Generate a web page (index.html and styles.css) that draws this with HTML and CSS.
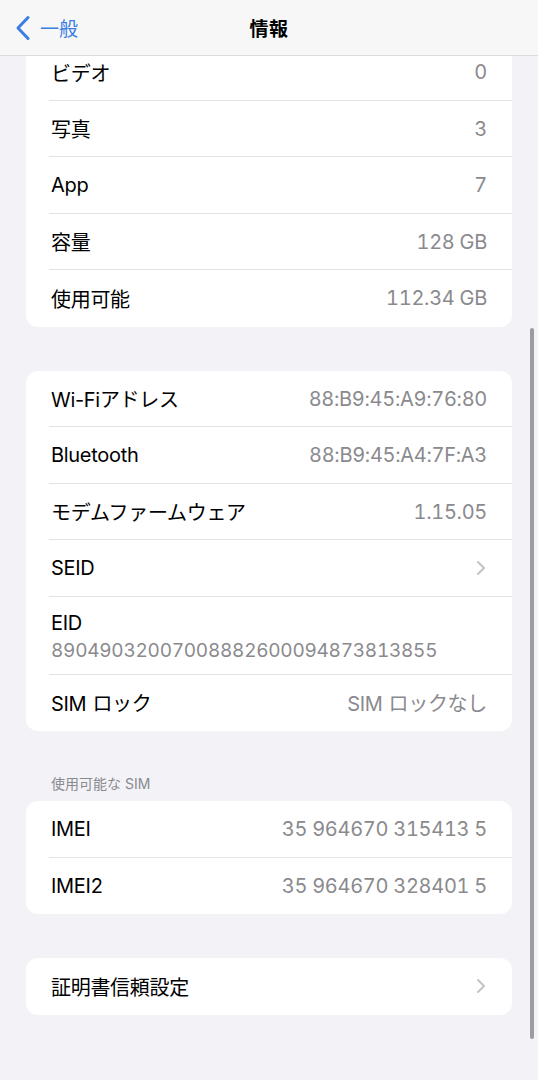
FILE: index.html
```html
<!DOCTYPE html>
<html lang="ja">
<head>
    <meta charset="UTF-8">
    <meta name="viewport" content="width=device-width, initial-scale=1.0">
    <title>情報</title>
    <link rel="stylesheet" href="styles.css">
</head>
<body>
    <div class="screen">
        <header class="navbar">
            <div class="back">
                <svg class="back-icon" width="16" height="26" viewBox="0 0 16 26">
                    <path d="M13 2.5 L3 13 L13 23.5" fill="none" stroke="currentColor" stroke-width="3" stroke-linecap="round" stroke-linejoin="round"/>
                </svg>
                <span>一般</span>
            </div>
            <div class="title">情報</div>
        </header>

        <main class="content">
            <section class="card">
                <div class="row"><span class="label">ビデオ</span><span class="value">0</span></div>
                <div class="row"><span class="label">写真</span><span class="value">3</span></div>
                <div class="row"><span class="label">App</span><span class="value">7</span></div>
                <div class="row"><span class="label">容量</span><span class="value">128 GB</span></div>
                <div class="row last"><span class="label">使用可能</span><span class="value">112.34 GB</span></div>
            </section>

            <section class="card">
                <div class="row"><span class="label">Wi-Fiアドレス</span><span class="value">88:B9:45:A9:76:80</span></div>
                <div class="row"><span class="label">Bluetooth</span><span class="value">88:B9:45:A4:7F:A3</span></div>
                <div class="row"><span class="label">モデムファームウェア</span><span class="value">1.15.05</span></div>
                <div class="row">
                    <span class="label">SEID</span>
                    <svg class="chevron" width="10" height="16" viewBox="0 0 10 16"><path d="M2 2 L8 8 L2 14" fill="none" stroke="currentColor" stroke-width="2" stroke-linecap="round" stroke-linejoin="round"/></svg>
                </div>
                <div class="row stacked">
                    <span class="label">EID</span>
                    <span class="mono">89049032007008882600094873813855</span>
                </div>
                <div class="row last"><span class="label">SIM<span class="jp-gap"></span>ロック</span><span class="value">SIM<span class="jp-gap"></span>ロックなし</span></div>
            </section>

            <div class="section-title">使用可能な SIM</div>
            <section class="card">
                <div class="row"><span class="label">IMEI</span><span class="value">35 964670 315413 5</span></div>
                <div class="row last"><span class="label">IMEI2</span><span class="value">35 964670 328401 5</span></div>
            </section>

            <section class="card">
                <div class="row last">
                    <span class="label">証明書信頼設定</span>
                    <svg class="chevron" width="10" height="16" viewBox="0 0 10 16"><path d="M2 2 L8 8 L2 14" fill="none" stroke="currentColor" stroke-width="2" stroke-linecap="round" stroke-linejoin="round"/></svg>
                </div>
            </section>
        </main>

        <div class="scrollbar"></div>
    </div>
</body>
</html>
```

FILE: styles.css
```css
body {
    margin: 0;
    font-family: Inter, "Noto Sans CJK JP", sans-serif;
    background-color: #f2f2f7;
    color: #000;
}
.screen {
    position: relative;
    width: 538px;
    height: 1080px;
    overflow: hidden;
    background-color: #f2f2f7;
}
.navbar {
    position: absolute;
    top: 0;
    left: 0;
    right: 0;
    height: 55px;
    background-color: #f7f7f7;
    border-bottom: 1px solid #dcdcde;
    display: flex;
    align-items: center;
    justify-content: center;
    z-index: 2;
}
.back {
    position: absolute;
    left: 15px;
    top: 14px;
    display: flex;
    align-items: center;
    gap: 9px;
    color: #3a7ee4;
    font-size: 19px;
}
.back-icon {
    display: block;
}
.title {
    font-size: 19px;
    font-weight: 700;
    letter-spacing: 0.5px;
}
.content {
    padding: 44px 26px 0 26px;
}
.card {
    background: #fff;
    border-radius: 12px;
    margin-bottom: 44px;
    overflow: hidden;
}
.row {
    position: relative;
    height: 56.5px;
    box-sizing: border-box;
    padding: 0 25px 0 25px;
    display: flex;
    align-items: center;
    justify-content: space-between;
    font-size: 20px;
    letter-spacing: -0.3px;
}
.row::after {
    content: "";
    position: absolute;
    left: 23px;
    right: 0;
    bottom: 0;
    height: 1px;
    background-color: #e3e3e6;
}
.row.last::after {
    display: none;
}
.row.stacked {
    height: 78px;
    flex-direction: column;
    align-items: flex-start;
    justify-content: center;
    gap: 4px;
    padding-top: 2px;
}
.value {
    color: #8a8a8e;
    font-variant-numeric: tabular-nums;
}
.jp-gap {
    display: inline-block;
    width: 6px;
}
.mono {
    font-size: 19px;
    font-variant-numeric: tabular-nums;
    letter-spacing: -0.25px;
    color: #8a8a8e;
}
.chevron {
    color: #c4c4c7;
    margin-right: 1px;
}
.section-title {
    margin-top: -44px;
    padding: 43px 25px 8px 25px;
    height: 19px;
    line-height: 19px;
    font-size: 14px;
    color: #8a8a8e;
}
.scrollbar {
    position: absolute;
    left: 530px;
    top: 328px;
    width: 3.5px;
    height: 711px;
    border-radius: 2px;
    background-color: #9c9ca0;
}
```
